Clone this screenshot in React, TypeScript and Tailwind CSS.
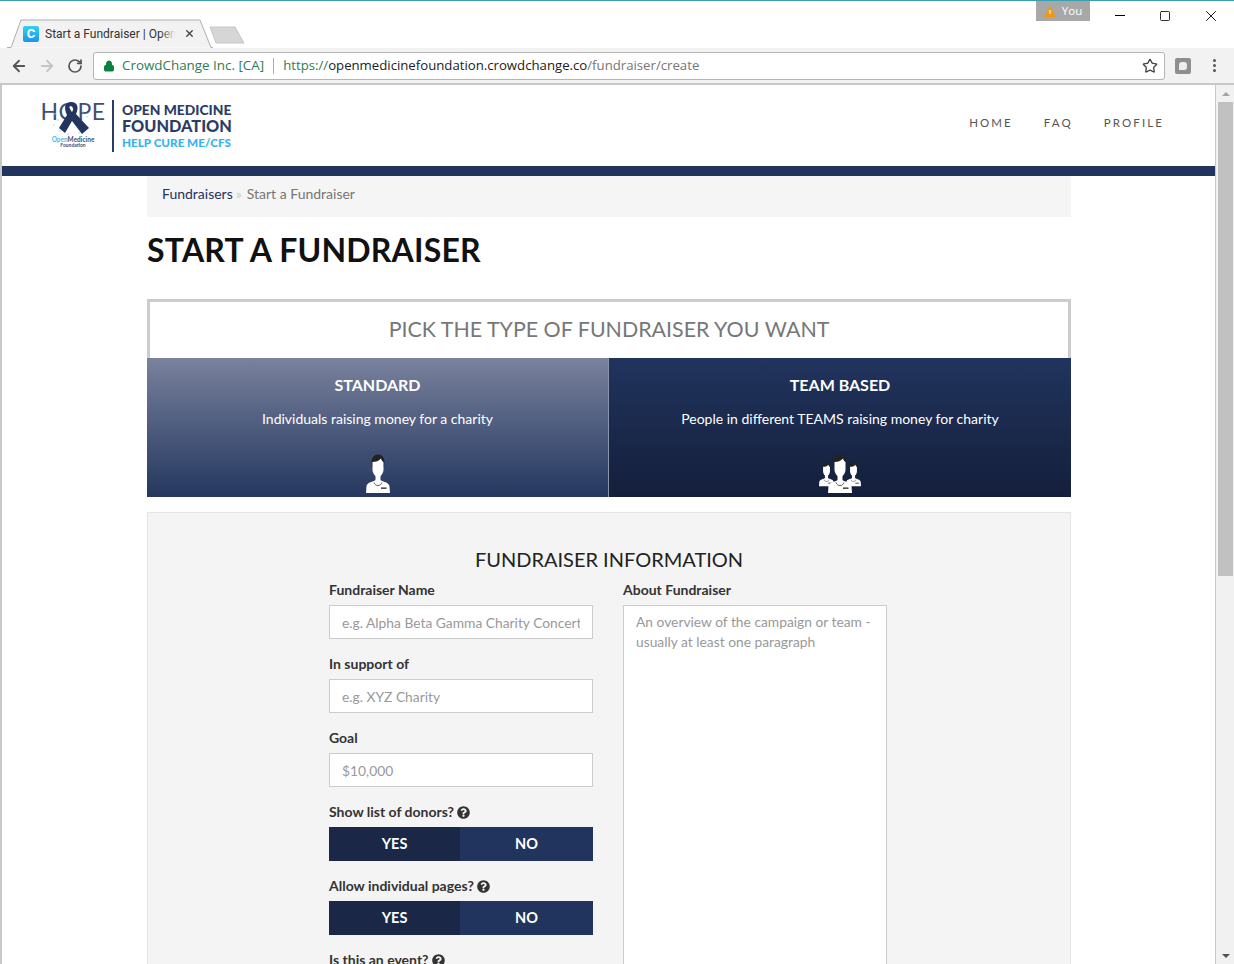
import { ArrowLeft, ArrowRight, RotateCw, Star, Lock, X, Square } from 'lucide-react';
import { FaQuestionCircle } from 'react-icons/fa';

function Person({ className = '' }: { className?: string }) {
  return (
    <svg viewBox="0 0 24 39" className={className}>
      <path d="M5.500 8 C5.500 -2 18.500 -2 18.500 8 L18 13 L6 13 Z" fill="#222" />
      <path d="M6.500 8 C10 8 13 7 15 4.500 C15.500 6.500 16.500 7.500 17.500 8 L17.500 16 C17 20 14.500 23 12 23 C9.500 23 7 20 6.500 16 Z" fill="#fff" />
      <path d="M9.500 21 L14.500 21 L14.500 26 C17 28 22.500 28 23.500 32 L24 39 L0 39 L0.500 32 C1.500 28 7 28 9.500 26 Z" fill="#fff" />
      <path d="M8 28.500 C9 32.500 15 32.500 16 28.500" stroke="#333" strokeWidth="0.8" fill="none" />
      <rect x="15" y="33.500" width="5.500" height="1.300" fill="#222" />
    </svg>
  );
}

function Group() {
  return (
    <div className="flex items-start h-[39px]">
      <Person className="w-[15px] h-[26px] mt-[7px] -mr-[6px]" />
      <Person className="relative w-[24px] h-[39px]" />
      <Person className="w-[15px] h-[26px] mt-[7px] -ml-[6px]" />
    </div>
  );
}

function Field({ label, placeholder }: { label: string; placeholder: string }) {
  return (
    <div className="mb-[15px]">
      <div className="h-[20px] mb-[5px] text-[14px] leading-[20px] font-bold text-[#333]">{label}</div>
      <div className="h-[34px] border border-[#ccc] bg-white px-[12px] text-[13.800px] leading-[33px] text-[#999]">
        <div className="overflow-hidden whitespace-nowrap">{placeholder}</div>
      </div>
    </div>
  );
}

function Toggle({ label }: { label: string }) {
  return (
    <div className="mb-[15px]">
      <div className="h-[20px] mb-[5px] flex items-center gap-[3px] text-[14px] leading-[20px] font-bold text-[#333]">
        {label}
        <FaQuestionCircle className="text-[13px] text-[#333]" />
      </div>
      <div className="flex h-[34px] text-[14.500px] font-bold text-white">
        <div className="w-[131px] bg-[#1a2747] flex items-center justify-center">YES</div>
        <div className="flex-1 bg-[#21345e] flex items-center justify-center">NO</div>
      </div>
    </div>
  );
}

export default function App() {
  return (
    <div className="w-[1234px] h-[964px] overflow-hidden flex flex-col bg-white font-['Lato',sans-serif]">
      {/* title bar */}
      <div className="h-[48px] shrink-0 border-t border-[#3b9fb0] flex items-end relative bg-white">
        <div className="relative ml-[7px] w-[206px] h-[29px]">
          <svg viewBox="0 0 206 29" className="absolute inset-0 w-full h-full">
            <path d="M0 28.500 L4 28.500 L14 1 L193 1 L204 28.500 L206 28.500" fill="#f2f2f2" stroke="#aeaeae" />
          </svg>
          <div className="relative flex items-center h-full pl-[16px] pr-[16px] font-['Roboto',sans-serif] text-[12px] text-[#333]">
            <span className="w-[16px] h-[16px] rounded-[2px] bg-gradient-to-b from-[#35d1f0] to-[#1a96e8] text-white text-[13px] font-bold leading-[16px] text-center mr-[6px] shrink-0">C</span>
            <span className="relative w-[131px] overflow-hidden whitespace-nowrap">
              Start a Fundraiser | Open
              <span className="absolute right-0 top-0 bottom-0 w-[16px] bg-gradient-to-r from-transparent to-[#f2f2f2]" />
            </span>
            <X className="w-[11px] h-[11px] ml-[8px] text-[#444]" strokeWidth={3} />
          </div>
        </div>
        <svg viewBox="0 0 36 18" className="w-[36px] h-[18px] mb-[4px] -ml-[4px]">
          <path d="M1 1 L26 1 L35 17 L7 17 Z" fill="#d6d6d6" stroke="#c6c6c6" />
        </svg>
        <div className="absolute top-0 left-[1036px] w-[54px] h-[20px] bg-[#a8a8a8] flex items-center justify-center gap-[6px] text-[11.500px] text-white font-['Open_Sans',sans-serif]">
          <svg viewBox="0 0 12 11" className="w-[12px] h-[11px]"><path d="M6 0 L12 11 L0 11 Z" fill="#ee9a10" /><rect x="5.500" y="4" width="1" height="4" fill="#fff" /></svg>
          You
        </div>
        <span className="absolute top-[14px] left-[1115px] w-[10px] h-px bg-black" />
        <Square className="absolute top-[9px] left-[1159px] w-[12px] h-[12px] text-black" strokeWidth={1.6} />
        <X className="absolute top-[6px] left-[1202px] w-[18px] h-[18px] text-black" strokeWidth={1.2} />
      </div>

      {/* toolbar */}
      <div className="h-[38px] shrink-0 bg-[#f2f2f2] border-t border-t-[#c4c4c4] -mt-px border-b-2 border-b-[#c8c8c8] flex items-center pl-[10px]">
        <ArrowLeft className="w-[18px] h-[18px] text-[#555]" strokeWidth={2.4} />
        <ArrowRight className="w-[18px] h-[18px] text-[#c4c4c4] ml-[10px]" strokeWidth={2.4} />
        <RotateCw className="w-[16px] h-[16px] text-[#555] ml-[11px]" strokeWidth={2.6} />
        <div className="ml-[10px] w-[1072px] h-[28px] bg-white border border-[#b4b4b4] rounded-[3px] flex items-center pl-[9px] pr-[6px] font-['Open_Sans',sans-serif] text-[13.200px] whitespace-nowrap">
          <Lock className="w-[12px] h-[12px] text-[#0b8043] fill-[#0b8043]" />
          <span className="ml-[7px] text-[13.400px] text-[#2f7d50]">CrowdChange Inc. [CA]</span>
          <span className="mx-[9px] w-px h-[16px] bg-[#aaa]" />
          <span className="text-[#2f7d50]">https://</span>
          <span className="text-[#222]">openmedicinefoundation.crowdchange.co</span>
          <span className="text-[#777]">/fundraiser/create</span>
          <Star className="ml-auto w-[16px] h-[16px] text-[#444]" strokeWidth={2} />
        </div>
        <span className="ml-[10px] w-[16px] h-[16px] rounded-[2px] bg-[#8f8f8f] flex items-center justify-center">
          <span className="w-[8px] h-[8px] rounded-[3px] rounded-bl-none bg-[#eee]" />
        </span>
        <div className="ml-[22px] flex flex-col gap-[2px]">
          <span className="w-[3px] h-[3px] rounded-full bg-[#555]" />
          <span className="w-[3px] h-[3px] rounded-full bg-[#555]" />
          <span className="w-[3px] h-[3px] rounded-full bg-[#555]" />
        </div>
      </div>

      {/* page */}
      <div className="flex-1 min-h-0 flex">
        <div className="flex-1 min-w-0 border-l-2 border-l-[#c8c8c8] border-r border-r-[#c8c8c8] overflow-hidden">
          <header className="h-[81px] flex items-center justify-between pl-[38px] pr-[51px]">
            <div className="flex items-center">
              <div className="w-[66px] mr-[7px] relative text-center -mt-[1px]">
                <div className="text-[23px] leading-[22px] tracking-[0.5px] text-[#3e4f76] -mt-[3px]">HOPE</div>
                <svg viewBox="0 0 38 34" className="absolute left-[12px] top-[-1px] w-[38px] h-[34px]">
                  <g fill="#a9c9e2">
                    <circle cx="3" cy="12" r="0.8" /><circle cx="6" cy="18" r="0.8" /><circle cx="2" cy="23" r="0.7" />
                    <circle cx="31" cy="10" r="0.8" /><circle cx="35" cy="15" r="0.7" /><circle cx="8" cy="29" r="0.8" />
                    <circle cx="27" cy="31" r="0.7" /><circle cx="16" cy="32" r="0.8" />
                  </g>
                  <path d="M19 0 C12 0 12 7 15 13 L7 26 L13 31 L20 19 L30 32 L37 26 L24 12 C27 6 26 0 19 0 Z M19 4 C22 4 22 7 20 10 C18 7 16 4 19 4 Z" fill="#22345f" fillRule="evenodd" />
                </svg>
                <div className="mt-[15px] text-[6.500px] leading-[6px] font-bold"><span className="text-[#52b7e8]">Open</span><span className="text-[#3e4f76]">Medicine</span></div>
                <div className="text-[5px] leading-[5px] font-bold text-[#3e4f76]">Foundation</div>
              </div>
              <div className="w-[2px] h-[52px] bg-[#2a3c66] mr-[8px] -ml-[1px]" />
              <div className="font-black whitespace-nowrap">
                <div className="text-[13.800px] leading-[16px] text-[#2b3d66]">OPEN MEDICINE</div>
                <div className="text-[16.300px] leading-[16px] text-[#2b3d66]">FOUNDATION</div>
                <div className="text-[11.700px] leading-[16px] text-[#35b5ee]">HELP CURE ME/CFS</div>
              </div>
            </div>
            <nav className="flex gap-[31px] text-[11.500px] tracking-[2.100px] text-[#555] -mt-[5px]">
              <span>HOME</span>
              <span>FAQ</span>
              <span>PROFILE</span>
            </nav>
          </header>
          <div className="h-[10px] bg-[#21345e]" />

          <div className="w-[924px] ml-[145px]">
            <div className="h-[41px] bg-[#f5f5f5] pl-[15px] pb-[7px] flex items-center text-[14px] text-[#777]">
              <span className="text-[#21345e]">Fundraisers</span>
              <span className="text-[#ccc] ml-[3px] mr-[5px]">»</span>
              <span>Start a Fundraiser</span>
            </div>
            <h1 className="h-[82px] pb-[16px] flex items-center text-[32px] font-bold tracking-[0.2px] text-[#111]">START A FUNDRAISER</h1>

            <div className="h-[59px] border-[3px] border-b-0 border-[#ccc] pb-[2px] flex items-center justify-center text-[21.400px] text-[#777]">
              PICK THE TYPE OF FUNDRAISER YOU WANT
            </div>
            <div className="flex h-[139px] text-white text-center">
              <div className="w-[462px] border-r border-[#8a94aa] bg-gradient-to-b from-[#7a829d] to-[#25375f] flex flex-col items-center pt-[17px]">
                <div className="text-[16px] leading-[20px] font-bold">STANDARD</div>
                <div className="mt-[14px] text-[14px] leading-[20px]">Individuals raising money for a charity</div>
                <Person className="mt-[25px] w-[24px] h-[39px]" />
              </div>
              <div className="flex-1 bg-gradient-to-b from-[#21345e] to-[#141f3b] flex flex-col items-center pt-[17px]">
                <div className="text-[16px] leading-[20px] font-bold">TEAM BASED</div>
                <div className="mt-[14px] text-[14px] leading-[20px]">People in different TEAMS raising money for charity</div>
                <div className="mt-[25px]"><Group /></div>
              </div>
            </div>

            <div className="mt-[15px] h-[500px] bg-[#f4f4f4] border border-[#e5e5e5] pt-[34px]">
              <div className="text-center text-[20px] leading-[24px] text-[#222]">FUNDRAISER INFORMATION</div>
              <div className="mt-[9px] pl-[181px] flex gap-[30px]">
                <div className="w-[264px]">
                  <Field label="Fundraiser Name" placeholder="e.g. Alpha Beta Gamma Charity Concert" />
                  <Field label="In support of" placeholder="e.g. XYZ Charity" />
                  <Field label="Goal" placeholder="$10,000" />
                  <Toggle label="Show list of donors?" />
                  <Toggle label="Allow individual pages?" />
                  <Toggle label="Is this an event?" />
                </div>
                <div className="w-[264px]">
                  <div className="h-[20px] mb-[5px] text-[14px] leading-[20px] font-bold text-[#333]">About Fundraiser</div>
                  <div className="h-[400px] border border-[#ccc] bg-white px-[12px] py-[6px] text-[13.800px] leading-[20px] text-[#999]">
                    An overview of the campaign or team - usually at least one paragraph
                  </div>
                </div>
              </div>
            </div>
          </div>
        </div>

        {/* scrollbar */}
        <div className="w-[18px] shrink-0 bg-[#f1f1f1] flex flex-col items-center pl-px">
          <div className="h-[17px] flex items-center justify-center">
            <span className="border-x-[4px] border-x-transparent border-b-[4px] border-b-[#a3a3a3]" />
          </div>
          <div className="w-[15px] h-[474px] bg-[#c1c1c1]" />
          <div className="mt-auto h-[17px] flex items-center justify-center">
            <span className="border-x-[4px] border-x-transparent border-t-[4px] border-t-[#505050]" />
          </div>
        </div>
      </div>
    </div>
  );
}
